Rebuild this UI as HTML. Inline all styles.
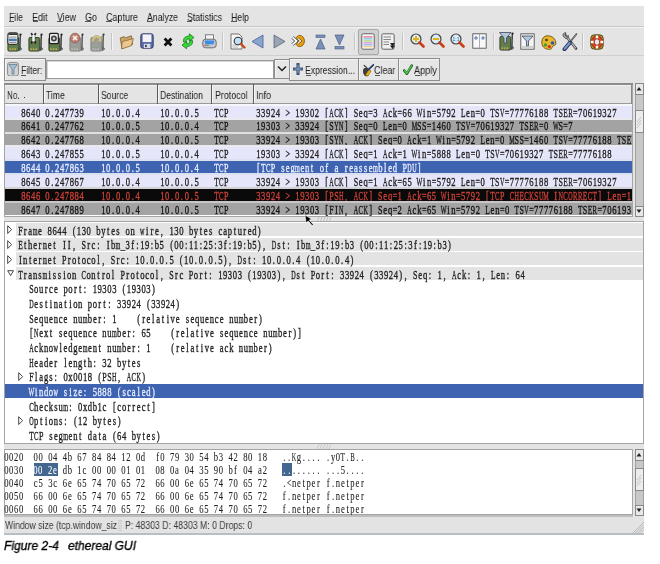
<!DOCTYPE html><html><head><meta charset="utf-8"><style>html,body{margin:0;padding:0;width:660px;height:564px;overflow:hidden;background:#fff;}.r{position:absolute;}.sv{will-change:transform;overflow:visible;}.t{position:absolute;white-space:pre;transform-origin:0 0;will-change:transform;}</style></head><body><div class="r" style="left:0px;top:0px;width:660px;height:564px;background:#fff;"></div>
<div class="r" style="left:4px;top:6px;width:640px;height:527px;background:#e4e4e4;"></div>
<div class="r" style="left:4px;top:26px;width:640px;height:1px;background:#c8c8c8;"></div>
<div class="r" style="left:4px;top:27px;width:640px;height:1px;background:#f2f2f2;"></div>
<div class="t" style="left:8.50px;top:11.52px;font-family:'Liberation Sans', sans-serif;font-size:11.2px;line-height:11.2px;color:#1a1a1a;transform:scaleX(0.7764);">File</div>
<div class="r" style="left:9px;top:21.4px;width:5px;height:1px;background:#555;"></div>
<div class="t" style="left:32.00px;top:11.52px;font-family:'Liberation Sans', sans-serif;font-size:11.2px;line-height:11.2px;color:#1a1a1a;transform:scaleX(0.8039);">Edit</div>
<div class="r" style="left:32.5px;top:21.4px;width:5px;height:1px;background:#555;"></div>
<div class="t" style="left:56.50px;top:11.52px;font-family:'Liberation Sans', sans-serif;font-size:11.2px;line-height:11.2px;color:#1a1a1a;transform:scaleX(0.7901);">View</div>
<div class="r" style="left:57px;top:21.4px;width:6px;height:1px;background:#555;"></div>
<div class="t" style="left:84.50px;top:11.52px;font-family:'Liberation Sans', sans-serif;font-size:11.2px;line-height:11.2px;color:#1a1a1a;transform:scaleX(0.8033);">Go</div>
<div class="r" style="left:85px;top:21.4px;width:6px;height:1px;background:#555;"></div>
<div class="t" style="left:105.50px;top:11.52px;font-family:'Liberation Sans', sans-serif;font-size:11.2px;line-height:11.2px;color:#1a1a1a;transform:scaleX(0.8038);">Capture</div>
<div class="r" style="left:106px;top:21.4px;width:6px;height:1px;background:#555;"></div>
<div class="t" style="left:146.50px;top:11.52px;font-family:'Liberation Sans', sans-serif;font-size:11.2px;line-height:11.2px;color:#1a1a1a;transform:scaleX(0.7786);">Analyze</div>
<div class="r" style="left:147px;top:21.4px;width:6px;height:1px;background:#555;"></div>
<div class="t" style="left:186.50px;top:11.52px;font-family:'Liberation Sans', sans-serif;font-size:11.2px;line-height:11.2px;color:#1a1a1a;transform:scaleX(0.7818);">Statistics</div>
<div class="r" style="left:187px;top:21.4px;width:5px;height:1px;background:#555;"></div>
<div class="t" style="left:230.50px;top:11.52px;font-family:'Liberation Sans', sans-serif;font-size:11.2px;line-height:11.2px;color:#1a1a1a;transform:scaleX(0.7821);">Help</div>
<div class="r" style="left:231px;top:21.4px;width:6px;height:1px;background:#555;"></div>
<div class="r" style="left:4px;top:55px;width:640px;height:1px;background:#cfcfcf;"></div>
<div class="r" style="left:111px;top:33px;width:1px;height:17px;background:#c4c4c4;"></div>
<div class="r" style="left:112px;top:33px;width:1px;height:17px;background:#f4f4f4;"></div>
<div class="r" style="left:222px;top:33px;width:1px;height:17px;background:#c4c4c4;"></div>
<div class="r" style="left:223px;top:33px;width:1px;height:17px;background:#f4f4f4;"></div>
<div class="r" style="left:354px;top:33px;width:1px;height:17px;background:#c4c4c4;"></div>
<div class="r" style="left:355px;top:33px;width:1px;height:17px;background:#f4f4f4;"></div>
<div class="r" style="left:402px;top:33px;width:1px;height:17px;background:#c4c4c4;"></div>
<div class="r" style="left:403px;top:33px;width:1px;height:17px;background:#f4f4f4;"></div>
<div class="r" style="left:493px;top:33px;width:1px;height:17px;background:#c4c4c4;"></div>
<div class="r" style="left:494px;top:33px;width:1px;height:17px;background:#f4f4f4;"></div>
<div class="r" style="left:582px;top:33px;width:1px;height:17px;background:#c4c4c4;"></div>
<div class="r" style="left:583px;top:33px;width:1px;height:17px;background:#f4f4f4;"></div>
<svg class="r" style="left:6.7px;top:31.6px" width="16" height="20" viewBox="0 0 16 20"><g opacity="1"><rect x="0.9" y="5.5" width="10.8" height="13.6" rx="1.2" fill="#5f7f4c" stroke="#2c3c24" stroke-width="0.9"/><path d="M2.5 10 L9 10 M2.5 13 L7 13" stroke="#8a6a40" stroke-width="0.8"/><rect x="2.2" y="16.3" width="1.6" height="2" fill="#c0a850"/><rect x="4.8" y="16.3" width="1.6" height="2" fill="#c0a850"/><rect x="7.4" y="16.3" width="1.6" height="2" fill="#c0a850"/><path d="M13.3 2.5 L12.8 18.8" stroke="#2a2a2a" stroke-width="1.3" fill="none"/><circle cx="13.6" cy="2.6" r="1.1" fill="#222"/><path d="M12.6 15 L14.6 17.5" stroke="#555" stroke-width="1.4"/><rect x="0.9" y="0.8" width="10" height="11.5" rx="1.6" fill="#f6f6f6" stroke="#1e1e1e" stroke-width="1"/><rect x="1.4" y="1.2" width="9" height="1.8" fill="#333"/><rect x="2.3" y="4.6" width="7.2" height="0.9" fill="#777"/><rect x="2" y="6.6" width="7.8" height="2.6" fill="#4a7ab0"/><rect x="2.3" y="10.1" width="7.2" height="0.9" fill="#888"/></g></svg>
<svg class="r" style="left:27.7px;top:31.6px" width="16" height="20" viewBox="0 0 16 20"><g opacity="1"><rect x="0.9" y="5.5" width="10.8" height="13.6" rx="1.2" fill="#5f7f4c" stroke="#2c3c24" stroke-width="0.9"/><path d="M2.5 10 L9 10 M2.5 13 L7 13" stroke="#8a6a40" stroke-width="0.8"/><rect x="2.2" y="16.3" width="1.6" height="2" fill="#c0a850"/><rect x="4.8" y="16.3" width="1.6" height="2" fill="#c0a850"/><rect x="7.4" y="16.3" width="1.6" height="2" fill="#c0a850"/><path d="M13.3 2.5 L12.8 18.8" stroke="#2a2a2a" stroke-width="1.3" fill="none"/><circle cx="13.6" cy="2.6" r="1.1" fill="#222"/><path d="M12.6 15 L14.6 17.5" stroke="#555" stroke-width="1.4"/><path d="M3.2 1.2 L4.6 3.5 L4.6 9 L3.2 11.5 M7.8 1.2 L6.4 3.5 L6.4 9 L7.8 11.5" stroke="#1a1a1a" stroke-width="1.6" fill="none"/><rect x="4.2" y="3" width="2.6" height="6.5" fill="#fafafa"/></g></svg>
<svg class="r" style="left:48.2px;top:31.6px" width="16" height="20" viewBox="0 0 16 20"><g opacity="1"><rect x="0.9" y="5.5" width="10.8" height="13.6" rx="1.2" fill="#5f7f4c" stroke="#2c3c24" stroke-width="0.9"/><path d="M2.5 10 L9 10 M2.5 13 L7 13" stroke="#8a6a40" stroke-width="0.8"/><rect x="2.2" y="16.3" width="1.6" height="2" fill="#c0a850"/><rect x="4.8" y="16.3" width="1.6" height="2" fill="#c0a850"/><rect x="7.4" y="16.3" width="1.6" height="2" fill="#c0a850"/><path d="M13.3 2.5 L12.8 18.8" stroke="#2a2a2a" stroke-width="1.3" fill="none"/><circle cx="13.6" cy="2.6" r="1.1" fill="#222"/><path d="M12.6 15 L14.6 17.5" stroke="#555" stroke-width="1.4"/><rect x="0.9" y="0.8" width="10" height="11.5" rx="1.6" fill="#1e1e1e"/><rect x="2" y="2" width="7.8" height="9" rx="1" fill="#e8e8e8"/><circle cx="5.9" cy="6.5" r="3" fill="#444"/><circle cx="5.9" cy="6.5" r="1.2" fill="#ddd"/></g></svg>
<svg class="r" style="left:69px;top:31.6px" width="16" height="20" viewBox="0 0 16 20"><g opacity="0.85"><rect x="0.9" y="5.5" width="10.8" height="13.6" rx="1.2" fill="#8c908a" stroke="#6c706a" stroke-width="0.9"/><path d="M2.5 10 L9 10 M2.5 13 L7 13" stroke="#999" stroke-width="0.8"/><rect x="2.2" y="16.3" width="1.6" height="2" fill="#b0b0a8"/><rect x="4.8" y="16.3" width="1.6" height="2" fill="#b0b0a8"/><rect x="7.4" y="16.3" width="1.6" height="2" fill="#b0b0a8"/><path d="M13.3 2.5 L12.8 18.8" stroke="#2a2a2a" stroke-width="1.3" fill="none"/><circle cx="13.6" cy="2.6" r="1.1" fill="#222"/><path d="M12.6 15 L14.6 17.5" stroke="#555" stroke-width="1.4"/><circle cx="6" cy="6" r="4.8" fill="#c0705e" stroke="#7a4a40" stroke-width="0.8"/><path d="M4 4 L8 8 M8 4 L4 8" stroke="#fff" stroke-width="1.5"/></g></svg>
<svg class="r" style="left:89.8px;top:31.6px" width="16" height="20" viewBox="0 0 16 20"><g opacity="0.85"><rect x="0.9" y="5.5" width="10.8" height="13.6" rx="1.2" fill="#8c908a" stroke="#6c706a" stroke-width="0.9"/><path d="M2.5 10 L9 10 M2.5 13 L7 13" stroke="#999" stroke-width="0.8"/><rect x="2.2" y="16.3" width="1.6" height="2" fill="#b0b0a8"/><rect x="4.8" y="16.3" width="1.6" height="2" fill="#b0b0a8"/><rect x="7.4" y="16.3" width="1.6" height="2" fill="#b0b0a8"/><path d="M13.3 2.5 L12.8 18.8" stroke="#2a2a2a" stroke-width="1.3" fill="none"/><circle cx="13.6" cy="2.6" r="1.1" fill="#222"/><path d="M12.6 15 L14.6 17.5" stroke="#555" stroke-width="1.4"/><path d="M1.5 10 C1.5 3 8.5 1.5 10.5 6 L11.5 4 L11.5 10 L7 9 L9 7.8 C8 5 4 5 4 10Z" fill="#d8c070" stroke="#8a8a6a" stroke-width="0.6"/></g></svg>
<svg class="r" style="left:118.5px;top:33.5px" width="15" height="16" viewBox="0 0 15 16"><path d="M1.2 4 L5 2.6 L6.4 3.8 L12.5 1.8 L13.5 10.5 L3 14.5Z" fill="#c8a468" stroke="#7a6030" stroke-width="0.8"/><path d="M3.2 7.6 L14.4 4.6 L12.4 11.6 L2.6 15Z" fill="#ecc88e" stroke="#8a6a38" stroke-width="0.8"/></svg>
<svg class="r" style="left:139.5px;top:33px" width="14" height="16" viewBox="0 0 14 16"><rect x="0.8" y="0.8" width="12.4" height="14.4" rx="2" fill="#5a6aa8" stroke="#2a3460" stroke-width="0.9"/><rect x="2.6" y="1.4" width="8.8" height="7.6" fill="#f2f2f8"/><rect x="3.8" y="10.8" width="6.6" height="4.2" fill="#d8dce8"/><rect x="5" y="11.8" width="1.8" height="2.4" fill="#445"/></svg>
<svg class="r" style="left:162.5px;top:37px" width="10" height="10" viewBox="0 0 10 10"><path d="M1.6 1.6 L8.4 8.4 M8.4 1.6 L1.6 8.4" stroke="#111" stroke-width="2.8"/></svg>
<svg class="r" style="left:181px;top:33px" width="14" height="17" viewBox="0 0 14 17"><path d="M2.5 9 C2 5 4.5 3 8 3.2 L8.5 0.8 L13 4.6 L8.2 8.2 L8.2 5.8 C6 5.8 4.8 7 5 9.2Z" fill="#38d838" stroke="#1a7a1a" stroke-width="0.8" stroke-linejoin="round"/><path d="M11.5 7.5 C12 11.5 9.5 13.5 6 13.3 L5.5 15.8 L1 12 L5.8 8.4 L5.8 10.8 C8 10.8 9.2 9.6 9 7.4Z" fill="#38d838" stroke="#1a7a1a" stroke-width="0.8" stroke-linejoin="round"/></svg>
<svg class="r" style="left:201.5px;top:33.5px" width="15" height="15" viewBox="0 0 15 15"><rect x="3.5" y="0.8" width="8" height="6" fill="#f4f4f4" stroke="#666" stroke-width="0.8"/><rect x="0.8" y="5.2" width="13.4" height="8.6" rx="2.8" fill="#c4c8cc" stroke="#555" stroke-width="0.8"/><path d="M2.6 6.6 L12.4 6.6 L11.6 10.2 L3.4 10.2Z" fill="#3a8ae8"/><rect x="2.5" y="10.8" width="2" height="1" fill="#d03030"/><rect x="4.8" y="10.8" width="2" height="1" fill="#30a030"/></svg>
<svg class="r" style="left:229.5px;top:32.5px" width="16" height="17" viewBox="0 0 16 17"><path d="M1 1 L9 1 L12 4 L12 16 L1 16Z" fill="#f6f6f6" stroke="#555" stroke-width="0.8"/><path d="M2.5 12 L9 12 M2.5 14 L8 14" stroke="#aaa" stroke-width="0.8"/><circle cx="8" cy="8" r="3.8" fill="#bfe0f8" stroke="#333" stroke-width="1.1"/><path d="M10.8 10.8 L14.5 14.5" stroke="#c84a1a" stroke-width="2.4" stroke-linecap="round"/></svg>
<svg class="r" style="left:251px;top:34px" width="13" height="15" viewBox="0 0 13 15"><path d="M12 1 L12 14 L1 7.5Z" fill="#8aa4d0" stroke="#4a6090" stroke-width="0.8"/></svg>
<svg class="r" style="left:272.5px;top:34px" width="13" height="15" viewBox="0 0 13 15"><path d="M1 1 L1 14 L12 7.5Z" fill="#9aa4b4" stroke="#5a6478" stroke-width="0.8"/></svg>
<svg class="r" style="left:291px;top:34px" width="14" height="14" viewBox="0 0 14 14"><ellipse cx="8.8" cy="7" rx="4.6" ry="5.6" fill="#eaa010" stroke="#8a5a08" stroke-width="0.9"/><path d="M6.8 4.4 L9.6 7 L6.8 9.6" stroke="#6a4a10" stroke-width="2.4" fill="none"/><path d="M6.8 4.4 L9.6 7 L6.8 9.6" stroke="#fff" stroke-width="1.1" fill="none"/><path d="M1.5 3.4 L5.6 7 L1.5 10.6" stroke="#444" stroke-width="3.2" fill="none" stroke-linejoin="round"/><path d="M1.5 3.4 L5.6 7 L1.5 10.6" stroke="#fff" stroke-width="1.8" fill="none" stroke-linejoin="round"/></svg>
<svg class="r" style="left:314.5px;top:33.5px" width="11" height="16" viewBox="0 0 11 16"><rect x="1" y="1" width="9" height="2.5" fill="#7a90b8" stroke="#4a5a80" stroke-width="0.6"/><path d="M5.5 5 L10 15 L1 15Z" fill="#7a90b8" stroke="#4a5a80" stroke-width="0.7"/></svg>
<svg class="r" style="left:333.5px;top:33.5px" width="11" height="16" viewBox="0 0 11 16"><path d="M1 1 L10 1 L5.5 11Z" fill="#7a90b8" stroke="#4a5a80" stroke-width="0.7"/><rect x="1" y="12.5" width="9" height="2.5" fill="#7a90b8" stroke="#4a5a80" stroke-width="0.6"/></svg>
<div class="r" style="left:358px;top:28.5px;width:20.7px;height:26px;background:#d0d0d0;border:1px solid #a8a8a8;box-sizing:border-box;border-radius:2px;"></div>
<svg class="r" style="left:360.5px;top:33px" width="14" height="17" viewBox="0 0 14 17"><rect x="0.8" y="0.8" width="12.4" height="15.4" rx="1.5" fill="#fafafa" stroke="#555" stroke-width="0.9"/><rect x="2.5" y="3" width="9" height="1.6" fill="#e88aa8"/><rect x="2.5" y="5" width="9" height="1.6" fill="#8ad0e0"/><rect x="2.5" y="7" width="9" height="1.6" fill="#b8e08a"/><rect x="2.5" y="9" width="9" height="1.6" fill="#e0a0e0"/><rect x="2.5" y="11" width="9" height="1.6" fill="#a0c0f0"/><rect x="2.5" y="13" width="9" height="1.4" fill="#f0d090"/></svg>
<svg class="r" style="left:381px;top:33px" width="15" height="17" viewBox="0 0 15 17"><rect x="0.8" y="0.8" width="12.4" height="15.4" rx="1.5" fill="#f0f0f0" stroke="#555" stroke-width="0.9"/><path d="M2.5 4 L10 4 M2.5 6.5 L10 6.5 M2.5 9 L8 9 M2.5 11.5 L8 11.5" stroke="#888" stroke-width="1"/><path d="M9 10 L14 10 L11.5 13.5Z M9 12.5 L14 12.5 L11.5 16Z" fill="#222"/></svg>
<svg class="r" style="left:409.5px;top:33px" width="15" height="16" viewBox="0 0 15 16"><circle cx="6" cy="6" r="5" fill="#d8ecf8" stroke="#444" stroke-width="1.2"/><path d="M6 3 L6 9 M3 6 L9 6" stroke="#e8b010" stroke-width="2"/><path d="M9.5 9.5 L13.5 13.5" stroke="#c8401a" stroke-width="2.6" stroke-linecap="round"/></svg>
<svg class="r" style="left:429.5px;top:33px" width="15" height="16" viewBox="0 0 15 16"><circle cx="6" cy="6" r="5" fill="#d8ecf8" stroke="#444" stroke-width="1.2"/><path d="M3 6 L9 6" stroke="#e8b010" stroke-width="2"/><path d="M9.5 9.5 L13.5 13.5" stroke="#c8401a" stroke-width="2.6" stroke-linecap="round"/></svg>
<svg class="r" style="left:450px;top:33px" width="15" height="16" viewBox="0 0 15 16"><circle cx="6" cy="6" r="5" fill="#d8ecf8" stroke="#444" stroke-width="1.2"/><text x="6" y="8" font-size="5" text-anchor="middle" fill="#3060a0" font-family="Liberation Sans">1:1</text><path d="M9.5 9.5 L13.5 13.5" stroke="#c8401a" stroke-width="2.6" stroke-linecap="round"/></svg>
<svg class="r" style="left:472px;top:33px" width="15" height="16" viewBox="0 0 15 16"><rect x="0.8" y="0.8" width="13.4" height="14.4" fill="#f8f8f8" stroke="#555" stroke-width="0.9"/><path d="M7.5 1 L7.5 15" stroke="#999" stroke-width="0.8"/><path d="M2 5 L6 5 M4 3 L4 7 M9 5 L13 5 M11 3 L11 7" stroke="#4070b0" stroke-width="0.9"/></svg>
<svg class="r" style="left:498.5px;top:31.2px" width="16" height="20" viewBox="0 0 16 20"><g opacity="1"><rect x="0.9" y="5.5" width="10.8" height="13.6" rx="1.2" fill="#5f7f4c" stroke="#2c3c24" stroke-width="0.9"/><path d="M2.5 10 L9 10 M2.5 13 L7 13" stroke="#8a6a40" stroke-width="0.8"/><rect x="2.2" y="16.3" width="1.6" height="2" fill="#c0a850"/><rect x="4.8" y="16.3" width="1.6" height="2" fill="#c0a850"/><rect x="7.4" y="16.3" width="1.6" height="2" fill="#c0a850"/><path d="M13.3 2.5 L12.8 18.8" stroke="#2a2a2a" stroke-width="1.3" fill="none"/><circle cx="13.6" cy="2.6" r="1.1" fill="#222"/><path d="M12.6 15 L14.6 17.5" stroke="#555" stroke-width="1.4"/><path d="M0.5 1.5 L12 1.5 L7.5 7 L7.5 12 L5 12 L5 7Z" fill="#b0c8e0" stroke="#445" stroke-width="0.8"/></g></svg>
<svg class="r" style="left:519.5px;top:32.5px" width="15" height="17" viewBox="0 0 15 17"><rect x="0.8" y="0.8" width="13.4" height="15.4" fill="#f4f4f4" stroke="#555" stroke-width="0.9"/><path d="M2 3 L13 3 L8.5 8 L8.5 13 L6.5 13 L6.5 8Z" fill="#b0c8e0" stroke="#445" stroke-width="0.8"/><path d="M2 14 L13 14" stroke="#aaa"/></svg>
<svg class="r" style="left:540.5px;top:35px" width="16" height="15" viewBox="0 0 16 15"><path d="M6 0.8 C11 0.5 15.2 4 14.8 8.5 C14.5 11 12.5 10.2 11.5 11.5 C10.5 13.5 11 14.5 7.5 14.3 C3 14 0.8 11 0.8 7 C0.8 3.5 3 1 6 0.8Z" fill="#e8b828" stroke="#6a5010" stroke-width="0.9"/><ellipse cx="5.5" cy="5" rx="1.6" ry="1.2" fill="#5a4a20"/><circle cx="4.5" cy="10" r="1.7" fill="#40a040"/><circle cx="8.3" cy="11.5" r="1.6" fill="#d82828"/><circle cx="11.5" cy="8" r="1.8" fill="#2858c8"/></svg>
<svg class="r" style="left:562px;top:31.5px" width="16" height="19" viewBox="0 0 16 19"><path d="M3.5 3.5 L14 16.5" stroke="#333" stroke-width="2.6" stroke-linecap="round"/><path d="M3.5 3.5 L14 16.5" stroke="#b8b8b8" stroke-width="1.2"/><path d="M1 4 C0.5 1.5 2.5 0.5 4 0.8 L3 3 L4.5 4.5 L6.5 3.5 C6.8 5.5 5 7 3 6.2Z" fill="#a8a8a8" stroke="#333" stroke-width="0.7"/><path d="M8.5 9.5 L14.5 2" stroke="#333" stroke-width="1.6" stroke-linecap="round"/><path d="M8.5 9.5 L14.5 2" stroke="#ccc" stroke-width="0.6"/><path d="M2.5 17.2 L7.8 10.8" stroke="#2a3a5a" stroke-width="4" stroke-linecap="round"/><path d="M2.8 16.6 L7.4 11.1" stroke="#7a9ad0" stroke-width="2.2" stroke-linecap="round"/></svg>
<svg class="r" style="left:590px;top:34px" width="14" height="16" viewBox="0 0 14 16"><rect x="0.8" y="0.8" width="12.4" height="14.4" rx="3.5" fill="#a89a30" stroke="#4a4010" stroke-width="0.9"/><ellipse cx="7" cy="8" rx="5.6" ry="6.4" fill="#e04018" stroke="#6a2010" stroke-width="0.6"/><path d="M7 1.6 L7 4.6 M7 11.4 L7 14.4 M0.9 8 L3.6 8 M10.4 8 L13.1 8" stroke="#fff" stroke-width="2.4"/><ellipse cx="7" cy="8" rx="2.7" ry="3.2" fill="#e8e8e8" stroke="#6a2010" stroke-width="0.7"/></svg>
<div class="r" style="left:4px;top:58px;width:41.5px;height:22.5px;background:#e6e6e6;border:1px solid #8c8c8c;box-sizing:border-box;box-shadow:inset 1px 1px 0 #f4f4f4;"></div>
<svg class="r" style="left:7px;top:61.5px" width="12" height="14.5" viewBox="0 0 12 14.5"><rect x="0.6" y="0.6" width="10.8" height="13.3" rx="2" fill="#d4d4d4" stroke="#8a8a8a" stroke-width="1"/><path d="M1.8 2.5 L10.2 2.5 L7 7 L7 12 L5 12 L5 7Z" fill="#9cc0e0" stroke="#566" stroke-width="0.6"/></svg>
<div class="t" style="left:20.50px;top:64.91px;font-family:'Liberation Sans', sans-serif;font-size:10.5px;line-height:10.5px;color:#222;transform:scaleX(0.8152);">Filter:</div>
<div class="r" style="left:21px;top:75px;width:5.4px;height:1px;background:#555;"></div>
<div class="r" style="left:45.8px;top:59.5px;width:228px;height:19.5px;background:#fff;border:1px solid #9a9a9a;box-sizing:border-box;box-shadow:inset 1px 1px 0 #d8d8d8;"></div>
<div class="r" style="left:273.5px;top:59px;width:16.0px;height:20px;background:#e6e6e6;border:1px solid #8c8c8c;box-sizing:border-box;box-shadow:inset 1px 1px 0 #f4f4f4;"></div>
<svg class="r" style="left:276.5px;top:65px" width="10" height="8" viewBox="0 0 10 8"><path d="M1 1.5 L5 5.5 L9 1.5" stroke="#222" stroke-width="1.5" fill="none"/></svg>
<div class="r" style="left:289px;top:58px;width:70px;height:22.5px;background:#e6e6e6;border:1px solid #8c8c8c;box-sizing:border-box;box-shadow:inset 1px 1px 0 #f4f4f4;"></div>
<div class="r" style="left:358px;top:58px;width:41px;height:22.5px;background:#e6e6e6;border:1px solid #8c8c8c;box-sizing:border-box;box-shadow:inset 1px 1px 0 #f4f4f4;"></div>
<div class="r" style="left:398px;top:58px;width:41.5px;height:22.5px;background:#e6e6e6;border:1px solid #8c8c8c;box-sizing:border-box;box-shadow:inset 1px 1px 0 #f4f4f4;"></div>
<svg class="r" style="left:293px;top:63px" width="10" height="12" viewBox="0 0 10 12"><path d="M5 1 L5 11 M0.6 6 L9.4 6" stroke="#3e5878" stroke-width="3.2" stroke-linecap="round"/><path d="M5 2 L5 10 M1.6 6 L8.4 6" stroke="#8aa6c6" stroke-width="1"/></svg>
<div class="t" style="left:305.00px;top:64.91px;font-family:'Liberation Sans', sans-serif;font-size:10.5px;line-height:10.5px;color:#222;transform:scaleX(0.8237);">Expression...</div>
<div class="r" style="left:305.5px;top:75px;width:5.5px;height:1px;background:#555;"></div>
<svg class="r" style="left:361.5px;top:62.5px" width="12" height="14" viewBox="0 0 12 14"><path d="M2 2 C3 4 5 4 5 6" stroke="#444" stroke-width="1.4" fill="none"/><path d="M1 8 C1 5 3 4.5 5.5 5 L9 8 L6 13 C3 14 1 12 1 8Z" fill="#3c3c3c"/><path d="M9 8 L6 13 L3.5 12 L7 6.5Z" fill="#e8b010" stroke="#8a6a10" stroke-width="0.5"/><path d="M6.5 6.5 L11.5 1.8" stroke="#2a3a6a" stroke-width="1.8" stroke-linecap="round"/></svg>
<div class="t" style="left:374.00px;top:64.91px;font-family:'Liberation Sans', sans-serif;font-size:10.5px;line-height:10.5px;color:#222;transform:scaleX(0.8488);">Clear</div>
<div class="r" style="left:374.5px;top:75px;width:5.5px;height:1px;background:#555;"></div>
<svg class="r" style="left:403px;top:63.5px" width="10" height="11.5" viewBox="0 0 10 11.5"><path d="M1.2 6.5 L3.8 9.8 L8.8 1.5" stroke="#1e6a1e" stroke-width="2.6" fill="none" stroke-linecap="round" stroke-linejoin="round"/><path d="M1.5 6.6 L3.8 9.3 L8.5 1.8" stroke="#5ad05a" stroke-width="1.2" fill="none" stroke-linecap="round"/></svg>
<div class="t" style="left:414.00px;top:64.91px;font-family:'Liberation Sans', sans-serif;font-size:10.5px;line-height:10.5px;color:#222;transform:scaleX(0.8719);">Apply</div>
<div class="r" style="left:414.5px;top:75px;width:5.5px;height:1px;background:#555;"></div>
<div class="r" style="left:4px;top:83px;width:629px;height:134px;background:#fff;border:1px solid #a4a4a4;box-sizing:border-box;"></div>
<div class="r" style="left:5px;top:84px;width:627px;height:20px;background:#e4e4e4;border-bottom:1px solid #9a9a9a;box-sizing:border-box;"></div>
<div class="r" style="left:4px;top:83px;width:629px;height:1.6px;background:#8c8c8c;"></div>
<div class="r" style="left:5px;top:85px;width:627px;height:1px;background:#f2f2f2;"></div>
<div class="r" style="left:43px;top:84px;width:1px;height:20px;background:#5a5a5a;"></div>
<div class="r" style="left:44px;top:85px;width:1px;height:18px;background:#f6f6f6;"></div>
<div class="r" style="left:98px;top:84px;width:1px;height:20px;background:#5a5a5a;"></div>
<div class="r" style="left:99px;top:85px;width:1px;height:18px;background:#f6f6f6;"></div>
<div class="r" style="left:157px;top:84px;width:1px;height:20px;background:#5a5a5a;"></div>
<div class="r" style="left:158px;top:85px;width:1px;height:18px;background:#f6f6f6;"></div>
<div class="r" style="left:211px;top:84px;width:1px;height:20px;background:#5a5a5a;"></div>
<div class="r" style="left:212px;top:85px;width:1px;height:18px;background:#f6f6f6;"></div>
<div class="r" style="left:253px;top:84px;width:1px;height:20px;background:#5a5a5a;"></div>
<div class="r" style="left:254px;top:85px;width:1px;height:18px;background:#f6f6f6;"></div>
<div class="r" style="left:631px;top:84px;width:1px;height:20px;background:#8a8a8a;"></div>
<div class="t" style="left:7.30px;top:89.59px;font-family:'Liberation Sans', sans-serif;font-size:11px;line-height:11px;color:#222;transform:scaleX(0.7358);">No.</div>
<div class="r" style="left:23.5px;top:96.8px;width:1.6px;height:1.6px;background:#333;"></div>
<div class="t" style="left:46.00px;top:89.59px;font-family:'Liberation Sans', sans-serif;font-size:11px;line-height:11px;color:#222;transform:scaleX(0.7776);">Time</div>
<div class="t" style="left:101.30px;top:89.59px;font-family:'Liberation Sans', sans-serif;font-size:11px;line-height:11px;color:#222;transform:scaleX(0.7803);">Source</div>
<div class="t" style="left:160.40px;top:89.59px;font-family:'Liberation Sans', sans-serif;font-size:11px;line-height:11px;color:#222;transform:scaleX(0.7793);">Destination</div>
<div class="t" style="left:214.50px;top:89.59px;font-family:'Liberation Sans', sans-serif;font-size:11px;line-height:11px;color:#222;transform:scaleX(0.8053);">Protocol</div>
<div class="t" style="left:256.20px;top:89.59px;font-family:'Liberation Sans', sans-serif;font-size:11px;line-height:11px;color:#222;transform:scaleX(0.8170);">Info</div>
<div class="r" style="left:5px;top:104px;width:627px;height:112px;overflow:hidden;">
<div class="r" style="left:0px;top:2px;width:627px;height:12px;background:#e6e6fa;"></div>
<div class="r" style="left:0px;top:0px;width:627px;height:2px;background:#f6f6fa;"></div>
<svg class="r sv" style="left:16.00px;top:-0.50px" width="26" height="17"><g text-anchor="middle" font-family="Liberation Serif" font-size="12.3" fill="#222" stroke="#222" stroke-width="0.35"><text transform="scale(0.7,1)" y="13" x="3.5 10.4 17.4 24.4">8640</text></g></svg>
<svg class="r sv" style="left:39.80px;top:-0.50px" width="45" height="17"><g text-anchor="middle" font-family="Liberation Serif" font-size="12.3" fill="#222" stroke="#222" stroke-width="0.35"><text transform="scale(0.7,1)" y="13" x="3.5 10.4 17.4 24.4 31.3 38.3 45.3 52.2">0.247739</text></g></svg>
<svg class="r sv" style="left:96.00px;top:-0.50px" width="45" height="17"><g text-anchor="middle" font-family="Liberation Serif" font-size="12.3" fill="#222" stroke="#222" stroke-width="0.35"><text transform="scale(0.7,1)" y="13" x="3.5 10.4 17.4 24.4 31.3 38.3 45.3 52.2">10.0.0.4</text></g></svg>
<svg class="r sv" style="left:154.80px;top:-0.50px" width="45" height="17"><g text-anchor="middle" font-family="Liberation Serif" font-size="12.3" fill="#222" stroke="#222" stroke-width="0.35"><text transform="scale(0.7,1)" y="13" x="3.5 10.4 17.4 24.4 31.3 38.3 45.3 52.2">10.0.0.5</text></g></svg>
<svg class="r sv" style="left:209.00px;top:-0.50px" width="21" height="17"><g text-anchor="middle" font-family="Liberation Serif" font-size="12.3" fill="#222" stroke="#222" stroke-width="0.35"><text transform="scale(0.55,1)" y="13" x="13.3">C</text><text transform="scale(0.6,1)" y="13" x="4.1">T</text><text transform="scale(0.65,1)" y="13" x="18.8">P</text></g></svg>
<svg class="r sv" style="left:250.80px;top:-0.50px" width="367" height="17"><g text-anchor="middle" font-family="Liberation Serif" font-size="12.3" fill="#222" stroke="#222" stroke-width="0.35"><text transform="scale(0.5,1)" y="13" x="151.1 170.6 258.4 326.6 492.4">AKAWV</text><text transform="scale(0.55,1)" y="13" x="146.2 571.7">CR</text><text transform="scale(0.6,1)" y="13" x="345.3 394.1 499.7 515.9">LTTE</text><text transform="scale(0.65,1)" y="13" x="48.8 153.8 176.2 221.2 273.8 341.2 371.2 386.2 468.8 491.2">&gt;S====S=S=</text><text transform="scale(0.7,1)" y="13" x="3.5 10.4 17.4 24.4 31.3 59.2 66.2 73.1 80.1 87.1 101.0 128.8 149.7 156.7 170.6 191.5 198.5 212.4 219.4 240.3 247.2 261.2 268.1 275.1 282.1 302.9 309.9 323.8 365.6 372.6 379.6 386.5 393.5 400.4 407.4 414.4 463.1 470.1 477.1 484.0 491.0 497.9 504.9 511.9">3392419302[]eq3ck66in5792en07777618870619327</text></g></svg>
<div class="r" style="left:0px;top:16px;width:627px;height:12px;background:#a3a3a3;"></div>
<div class="r" style="left:0px;top:14px;width:627px;height:2px;background:#ebebef;"></div>
<svg class="r sv" style="left:16.00px;top:13.37px" width="26" height="17"><g text-anchor="middle" font-family="Liberation Serif" font-size="12.3" fill="#141414" stroke="#141414" stroke-width="0.35"><text transform="scale(0.7,1)" y="13" x="3.5 10.4 17.4 24.4">8641</text></g></svg>
<svg class="r sv" style="left:39.80px;top:13.37px" width="45" height="17"><g text-anchor="middle" font-family="Liberation Serif" font-size="12.3" fill="#141414" stroke="#141414" stroke-width="0.35"><text transform="scale(0.7,1)" y="13" x="3.5 10.4 17.4 24.4 31.3 38.3 45.3 52.2">0.247762</text></g></svg>
<svg class="r sv" style="left:96.00px;top:13.37px" width="45" height="17"><g text-anchor="middle" font-family="Liberation Serif" font-size="12.3" fill="#141414" stroke="#141414" stroke-width="0.35"><text transform="scale(0.7,1)" y="13" x="3.5 10.4 17.4 24.4 31.3 38.3 45.3 52.2">10.0.0.5</text></g></svg>
<svg class="r sv" style="left:154.80px;top:13.37px" width="45" height="17"><g text-anchor="middle" font-family="Liberation Serif" font-size="12.3" fill="#141414" stroke="#141414" stroke-width="0.35"><text transform="scale(0.7,1)" y="13" x="3.5 10.4 17.4 24.4 31.3 38.3 45.3 52.2">10.0.0.4</text></g></svg>
<svg class="r sv" style="left:209.00px;top:13.37px" width="21" height="17"><g text-anchor="middle" font-family="Liberation Serif" font-size="12.3" fill="#141414" stroke="#141414" stroke-width="0.35"><text transform="scale(0.55,1)" y="13" x="13.3">C</text><text transform="scale(0.6,1)" y="13" x="4.1">T</text><text transform="scale(0.65,1)" y="13" x="18.8">P</text></g></svg>
<svg class="r sv" style="left:250.80px;top:13.37px" width="323" height="17"><g text-anchor="middle" font-family="Liberation Serif" font-size="12.3" fill="#141414" stroke="#141414" stroke-width="0.35"><text transform="scale(0.5,1)" y="13" x="160.9 170.6 316.9 424.1 599.6">YNMVW</text><text transform="scale(0.55,1)" y="13" x="509.7">R</text><text transform="scale(0.6,1)" y="13" x="215.3 337.2 442.8 459.1">LTTE</text><text transform="scale(0.65,1)" y="13" x="48.8 116.2 153.8 176.2 221.2 251.2 258.8 266.2 318.8 333.8 416.2 438.8 468.8 476.2">&gt;SS==SS=S=S=S=</text><text transform="scale(0.7,1)" y="13" x="3.5 10.4 17.4 24.4 31.3 59.2 66.2 73.1 80.1 87.1 101.0 128.8 149.7 156.7 170.6 191.5 198.5 212.4 254.2 261.2 268.1 275.1 316.9 323.8 330.8 337.8 344.7 351.7 358.7 365.6 414.4 449.2">1930333924[]eq0en014607061932707</text></g></svg>
<div class="r" style="left:0px;top:30px;width:627px;height:12px;background:#a3a3a3;"></div>
<div class="r" style="left:0px;top:28px;width:627px;height:2px;background:#e0e0e0;"></div>
<svg class="r sv" style="left:16.00px;top:27.24px" width="26" height="17"><g text-anchor="middle" font-family="Liberation Serif" font-size="12.3" fill="#141414" stroke="#141414" stroke-width="0.35"><text transform="scale(0.7,1)" y="13" x="3.5 10.4 17.4 24.4">8642</text></g></svg>
<svg class="r sv" style="left:39.80px;top:27.24px" width="45" height="17"><g text-anchor="middle" font-family="Liberation Serif" font-size="12.3" fill="#141414" stroke="#141414" stroke-width="0.35"><text transform="scale(0.7,1)" y="13" x="3.5 10.4 17.4 24.4 31.3 38.3 45.3 52.2">0.247768</text></g></svg>
<svg class="r sv" style="left:96.00px;top:27.24px" width="45" height="17"><g text-anchor="middle" font-family="Liberation Serif" font-size="12.3" fill="#141414" stroke="#141414" stroke-width="0.35"><text transform="scale(0.7,1)" y="13" x="3.5 10.4 17.4 24.4 31.3 38.3 45.3 52.2">10.0.0.4</text></g></svg>
<svg class="r sv" style="left:154.80px;top:27.24px" width="45" height="17"><g text-anchor="middle" font-family="Liberation Serif" font-size="12.3" fill="#141414" stroke="#141414" stroke-width="0.35"><text transform="scale(0.7,1)" y="13" x="3.5 10.4 17.4 24.4 31.3 38.3 45.3 52.2">10.0.0.5</text></g></svg>
<svg class="r sv" style="left:209.00px;top:27.24px" width="21" height="17"><g text-anchor="middle" font-family="Liberation Serif" font-size="12.3" fill="#141414" stroke="#141414" stroke-width="0.35"><text transform="scale(0.55,1)" y="13" x="13.3">C</text><text transform="scale(0.6,1)" y="13" x="4.1">T</text><text transform="scale(0.65,1)" y="13" x="18.8">P</text></g></svg>
<svg class="r sv" style="left:250.80px;top:27.24px" width="430" height="17"><g text-anchor="middle" font-family="Liberation Serif" font-size="12.3" fill="#141414" stroke="#141414" stroke-width="0.35"><text transform="scale(0.5,1)" y="13" x="160.9 170.6 199.9 219.4 307.1 365.6 511.9 619.1">YNAKAWMV</text><text transform="scale(0.55,1)" y="13" x="190.6 686.9">CR</text><text transform="scale(0.6,1)" y="13" x="377.8 499.7 605.3 621.6">LTTE</text><text transform="scale(0.65,1)" y="13" x="48.8 116.2 191.2 213.8 258.8 303.8 371.2 401.2 408.8 416.2 468.8 483.8 566.2 588.8">&gt;SS====SS=S=S=</text><text transform="scale(0.7,1)" y="13" x="3.5 10.4 17.4 24.4 31.3 59.2 66.2 73.1 80.1 87.1 101.0 128.8 163.7 184.6 191.5 205.4 226.3 233.3 247.2 268.1 275.1 289.0 296.0 302.9 309.9 330.8 337.8 351.7 393.5 400.4 407.4 414.4 456.2 463.1 470.1 477.1 484.0 491.0 497.9 504.9 553.7 560.6 567.6 574.6 581.5 588.5 595.4 602.4">3392419303[,]eq0ck1in5792en014607777618870619327</text></g></svg>
<div class="r" style="left:0px;top:43px;width:627px;height:12px;background:#e6e6fa;"></div>
<div class="r" style="left:0px;top:41px;width:627px;height:2px;background:#ebebef;"></div>
<svg class="r sv" style="left:16.00px;top:41.11px" width="26" height="17"><g text-anchor="middle" font-family="Liberation Serif" font-size="12.3" fill="#222" stroke="#222" stroke-width="0.35"><text transform="scale(0.7,1)" y="13" x="3.5 10.4 17.4 24.4">8643</text></g></svg>
<svg class="r sv" style="left:39.80px;top:41.11px" width="45" height="17"><g text-anchor="middle" font-family="Liberation Serif" font-size="12.3" fill="#222" stroke="#222" stroke-width="0.35"><text transform="scale(0.7,1)" y="13" x="3.5 10.4 17.4 24.4 31.3 38.3 45.3 52.2">0.247855</text></g></svg>
<svg class="r sv" style="left:96.00px;top:41.11px" width="45" height="17"><g text-anchor="middle" font-family="Liberation Serif" font-size="12.3" fill="#222" stroke="#222" stroke-width="0.35"><text transform="scale(0.7,1)" y="13" x="3.5 10.4 17.4 24.4 31.3 38.3 45.3 52.2">10.0.0.5</text></g></svg>
<svg class="r sv" style="left:154.80px;top:41.11px" width="45" height="17"><g text-anchor="middle" font-family="Liberation Serif" font-size="12.3" fill="#222" stroke="#222" stroke-width="0.35"><text transform="scale(0.7,1)" y="13" x="3.5 10.4 17.4 24.4 31.3 38.3 45.3 52.2">10.0.0.4</text></g></svg>
<svg class="r sv" style="left:209.00px;top:41.11px" width="21" height="17"><g text-anchor="middle" font-family="Liberation Serif" font-size="12.3" fill="#222" stroke="#222" stroke-width="0.35"><text transform="scale(0.55,1)" y="13" x="13.3">C</text><text transform="scale(0.6,1)" y="13" x="4.1">T</text><text transform="scale(0.65,1)" y="13" x="18.8">P</text></g></svg>
<svg class="r sv" style="left:250.80px;top:41.11px" width="362" height="17"><g text-anchor="middle" font-family="Liberation Serif" font-size="12.3" fill="#222" stroke="#222" stroke-width="0.35"><text transform="scale(0.5,1)" y="13" x="151.1 170.6 258.4 316.9 482.6">AKAWV</text><text transform="scale(0.55,1)" y="13" x="146.2 562.8">CR</text><text transform="scale(0.6,1)" y="13" x="337.2 385.9 491.6 507.8">LTTE</text><text transform="scale(0.65,1)" y="13" x="48.8 153.8 176.2 221.2 266.2 333.8 363.8 378.8 461.2 483.8">&gt;S====S=S=</text><text transform="scale(0.7,1)" y="13" x="3.5 10.4 17.4 24.4 31.3 59.2 66.2 73.1 80.1 87.1 101.0 128.8 149.7 156.7 170.6 191.5 198.5 212.4 233.3 240.3 254.2 261.2 268.1 275.1 296.0 302.9 316.9 358.7 365.6 372.6 379.6 386.5 393.5 400.4 407.4 456.2 463.1 470.1 477.1 484.0 491.0 497.9 504.9">1930333924[]eq1ck1in5888en07061932777776188</text></g></svg>
<div class="r" style="left:0px;top:57px;width:627px;height:12px;background:#3e63b0;"></div>
<div class="r" style="left:0px;top:55px;width:627px;height:2px;background:#dbe1f1;"></div>
<svg class="r sv" style="left:16.00px;top:54.98px" width="26" height="17"><g text-anchor="middle" font-family="Liberation Serif" font-size="12.3" fill="#e8ecff" stroke="#e8ecff" stroke-width="0.35"><text transform="scale(0.7,1)" y="13" x="3.5 10.4 17.4 24.4">8644</text></g></svg>
<svg class="r sv" style="left:39.80px;top:54.98px" width="45" height="17"><g text-anchor="middle" font-family="Liberation Serif" font-size="12.3" fill="#e8ecff" stroke="#e8ecff" stroke-width="0.35"><text transform="scale(0.7,1)" y="13" x="3.5 10.4 17.4 24.4 31.3 38.3 45.3 52.2">0.247863</text></g></svg>
<svg class="r sv" style="left:96.00px;top:54.98px" width="45" height="17"><g text-anchor="middle" font-family="Liberation Serif" font-size="12.3" fill="#e8ecff" stroke="#e8ecff" stroke-width="0.35"><text transform="scale(0.7,1)" y="13" x="3.5 10.4 17.4 24.4 31.3 38.3 45.3 52.2">10.0.0.5</text></g></svg>
<svg class="r sv" style="left:154.80px;top:54.98px" width="45" height="17"><g text-anchor="middle" font-family="Liberation Serif" font-size="12.3" fill="#e8ecff" stroke="#e8ecff" stroke-width="0.35"><text transform="scale(0.7,1)" y="13" x="3.5 10.4 17.4 24.4 31.3 38.3 45.3 52.2">10.0.0.4</text></g></svg>
<svg class="r sv" style="left:209.00px;top:54.98px" width="21" height="17"><g text-anchor="middle" font-family="Liberation Serif" font-size="12.3" fill="#e8ecff" stroke="#e8ecff" stroke-width="0.35"><text transform="scale(0.55,1)" y="13" x="13.3">C</text><text transform="scale(0.6,1)" y="13" x="4.1">T</text><text transform="scale(0.65,1)" y="13" x="18.8">P</text></g></svg>
<svg class="r sv" style="left:250.80px;top:54.98px" width="172" height="17"><g text-anchor="middle" font-family="Liberation Serif" font-size="12.3" fill="#e8ecff" stroke="#e8ecff" stroke-width="0.35"><text transform="scale(0.5,1)" y="13" x="82.9 238.9 307.1 316.9">mmDU</text><text transform="scale(0.55,1)" y="13" x="22.2">C</text><text transform="scale(0.6,1)" y="13" x="12.2">T</text><text transform="scale(0.65,1)" y="13" x="26.2 228.8">PP</text><text transform="scale(0.7,1)" y="13" x="3.5 38.3 45.3 52.2 66.2 73.1 80.1 94.0 101.0 114.9 128.8 135.8 142.8 149.7 156.7 163.7 177.6 184.6 191.5 198.5 233.3">[segentofareassebled]</text></g></svg>
<div class="r" style="left:0px;top:71px;width:627px;height:12px;background:#e6e6fa;"></div>
<div class="r" style="left:0px;top:69px;width:627px;height:2px;background:#dbe1f1;"></div>
<svg class="r sv" style="left:16.00px;top:68.85px" width="26" height="17"><g text-anchor="middle" font-family="Liberation Serif" font-size="12.3" fill="#222" stroke="#222" stroke-width="0.35"><text transform="scale(0.7,1)" y="13" x="3.5 10.4 17.4 24.4">8645</text></g></svg>
<svg class="r sv" style="left:39.80px;top:68.85px" width="45" height="17"><g text-anchor="middle" font-family="Liberation Serif" font-size="12.3" fill="#222" stroke="#222" stroke-width="0.35"><text transform="scale(0.7,1)" y="13" x="3.5 10.4 17.4 24.4 31.3 38.3 45.3 52.2">0.247867</text></g></svg>
<svg class="r sv" style="left:96.00px;top:68.85px" width="45" height="17"><g text-anchor="middle" font-family="Liberation Serif" font-size="12.3" fill="#222" stroke="#222" stroke-width="0.35"><text transform="scale(0.7,1)" y="13" x="3.5 10.4 17.4 24.4 31.3 38.3 45.3 52.2">10.0.0.4</text></g></svg>
<svg class="r sv" style="left:154.80px;top:68.85px" width="45" height="17"><g text-anchor="middle" font-family="Liberation Serif" font-size="12.3" fill="#222" stroke="#222" stroke-width="0.35"><text transform="scale(0.7,1)" y="13" x="3.5 10.4 17.4 24.4 31.3 38.3 45.3 52.2">10.0.0.5</text></g></svg>
<svg class="r sv" style="left:209.00px;top:68.85px" width="21" height="17"><g text-anchor="middle" font-family="Liberation Serif" font-size="12.3" fill="#222" stroke="#222" stroke-width="0.35"><text transform="scale(0.55,1)" y="13" x="13.3">C</text><text transform="scale(0.6,1)" y="13" x="4.1">T</text><text transform="scale(0.65,1)" y="13" x="18.8">P</text></g></svg>
<svg class="r sv" style="left:250.80px;top:68.85px" width="367" height="17"><g text-anchor="middle" font-family="Liberation Serif" font-size="12.3" fill="#222" stroke="#222" stroke-width="0.35"><text transform="scale(0.5,1)" y="13" x="151.1 170.6 258.4 326.6 492.4">AKAWV</text><text transform="scale(0.55,1)" y="13" x="146.2 571.7">CR</text><text transform="scale(0.6,1)" y="13" x="345.3 394.1 499.7 515.9">LTTE</text><text transform="scale(0.65,1)" y="13" x="48.8 153.8 176.2 221.2 273.8 341.2 371.2 386.2 468.8 491.2">&gt;S====S=S=</text><text transform="scale(0.7,1)" y="13" x="3.5 10.4 17.4 24.4 31.3 59.2 66.2 73.1 80.1 87.1 101.0 128.8 149.7 156.7 170.6 191.5 198.5 212.4 219.4 240.3 247.2 261.2 268.1 275.1 282.1 302.9 309.9 323.8 365.6 372.6 379.6 386.5 393.5 400.4 407.4 414.4 463.1 470.1 477.1 484.0 491.0 497.9 504.9 511.9">3392419303[]eq1ck65in5792en07777618870619327</text></g></svg>
<div class="r" style="left:0px;top:85px;width:627px;height:12px;background:#0a0a0a;"></div>
<div class="r" style="left:0px;top:83px;width:627px;height:2px;background:#d2d2d5;"></div>
<svg class="r sv" style="left:16.00px;top:82.72px" width="26" height="17"><g text-anchor="middle" font-family="Liberation Serif" font-size="12.3" fill="#cc4038" stroke="#cc4038" stroke-width="0.35"><text transform="scale(0.7,1)" y="13" x="3.5 10.4 17.4 24.4">8646</text></g></svg>
<svg class="r sv" style="left:39.80px;top:82.72px" width="45" height="17"><g text-anchor="middle" font-family="Liberation Serif" font-size="12.3" fill="#cc4038" stroke="#cc4038" stroke-width="0.35"><text transform="scale(0.7,1)" y="13" x="3.5 10.4 17.4 24.4 31.3 38.3 45.3 52.2">0.247884</text></g></svg>
<svg class="r sv" style="left:96.00px;top:82.72px" width="45" height="17"><g text-anchor="middle" font-family="Liberation Serif" font-size="12.3" fill="#cc4038" stroke="#cc4038" stroke-width="0.35"><text transform="scale(0.7,1)" y="13" x="3.5 10.4 17.4 24.4 31.3 38.3 45.3 52.2">10.0.0.4</text></g></svg>
<svg class="r sv" style="left:154.80px;top:82.72px" width="45" height="17"><g text-anchor="middle" font-family="Liberation Serif" font-size="12.3" fill="#cc4038" stroke="#cc4038" stroke-width="0.35"><text transform="scale(0.7,1)" y="13" x="3.5 10.4 17.4 24.4 31.3 38.3 45.3 52.2">10.0.0.5</text></g></svg>
<svg class="r sv" style="left:209.00px;top:82.72px" width="21" height="17"><g text-anchor="middle" font-family="Liberation Serif" font-size="12.3" fill="#cc4038" stroke="#cc4038" stroke-width="0.35"><text transform="scale(0.55,1)" y="13" x="13.3">C</text><text transform="scale(0.6,1)" y="13" x="4.1">T</text><text transform="scale(0.65,1)" y="13" x="18.8">P</text></g></svg>
<svg class="r sv" style="left:250.80px;top:82.72px" width="381" height="17"><g text-anchor="middle" font-family="Liberation Serif" font-size="12.3" fill="#cc4038" stroke="#cc4038" stroke-width="0.35"><text transform="scale(0.5,1)" y="13" x="170.6 199.9 219.4 307.1 375.4 521.6 550.9 570.4 580.1 609.4 628.9">HAKAWHKUMNO</text><text transform="scale(0.55,1)" y="13" x="190.6 438.7 465.3 491.9 562.8 580.6 589.4 607.2">CCCCCRRC</text><text transform="scale(0.6,1)" y="13" x="394.1 442.8 548.4 564.7 589.1">TEETL</text><text transform="scale(0.65,1)" y="13" x="48.8 116.2 123.8 191.2 213.8 258.8 311.2 378.8 431.2 566.2">&gt;PSS===PS=</text><text transform="scale(0.7,1)" y="13" x="3.5 10.4 17.4 24.4 31.3 59.2 66.2 73.1 80.1 87.1 101.0 128.8 163.7 184.6 191.5 205.4 226.3 233.3 247.2 254.2 275.1 282.1 296.0 302.9 309.9 316.9 330.8 428.3 491.0 511.9 518.8 532.8">3392419303[,]eq1ck65in5792[I]en1</text></g></svg>
<div class="r" style="left:0px;top:99px;width:627px;height:12px;background:#a3a3a3;"></div>
<div class="r" style="left:0px;top:97px;width:627px;height:2px;background:#c7c7c7;"></div>
<svg class="r sv" style="left:16.00px;top:96.59px" width="26" height="17"><g text-anchor="middle" font-family="Liberation Serif" font-size="12.3" fill="#141414" stroke="#141414" stroke-width="0.35"><text transform="scale(0.7,1)" y="13" x="3.5 10.4 17.4 24.4">8647</text></g></svg>
<svg class="r sv" style="left:39.80px;top:96.59px" width="45" height="17"><g text-anchor="middle" font-family="Liberation Serif" font-size="12.3" fill="#141414" stroke="#141414" stroke-width="0.35"><text transform="scale(0.7,1)" y="13" x="3.5 10.4 17.4 24.4 31.3 38.3 45.3 52.2">0.247889</text></g></svg>
<svg class="r sv" style="left:96.00px;top:96.59px" width="45" height="17"><g text-anchor="middle" font-family="Liberation Serif" font-size="12.3" fill="#141414" stroke="#141414" stroke-width="0.35"><text transform="scale(0.7,1)" y="13" x="3.5 10.4 17.4 24.4 31.3 38.3 45.3 52.2">10.0.0.4</text></g></svg>
<svg class="r sv" style="left:154.80px;top:96.59px" width="45" height="17"><g text-anchor="middle" font-family="Liberation Serif" font-size="12.3" fill="#141414" stroke="#141414" stroke-width="0.35"><text transform="scale(0.7,1)" y="13" x="3.5 10.4 17.4 24.4 31.3 38.3 45.3 52.2">10.0.0.5</text></g></svg>
<svg class="r sv" style="left:209.00px;top:96.59px" width="21" height="17"><g text-anchor="middle" font-family="Liberation Serif" font-size="12.3" fill="#141414" stroke="#141414" stroke-width="0.35"><text transform="scale(0.55,1)" y="13" x="13.3">C</text><text transform="scale(0.6,1)" y="13" x="4.1">T</text><text transform="scale(0.65,1)" y="13" x="18.8">P</text></g></svg>
<svg class="r sv" style="left:250.80px;top:96.59px" width="391" height="17"><g text-anchor="middle" font-family="Liberation Serif" font-size="12.3" fill="#141414" stroke="#141414" stroke-width="0.35"><text transform="scale(0.5,1)" y="13" x="170.6 199.9 219.4 307.1 375.4 541.1">NAKAWV</text><text transform="scale(0.55,1)" y="13" x="190.6 616.0">CR</text><text transform="scale(0.6,1)" y="13" x="385.9 434.7 540.3 556.6">LTTE</text><text transform="scale(0.65,1)" y="13" x="48.8 116.2 191.2 213.8 258.8 311.2 378.8 408.8 423.8 506.2 528.8">&gt;FS====S=S=</text><text transform="scale(0.7,1)" y="13" x="3.5 10.4 17.4 24.4 31.3 59.2 66.2 73.1 80.1 87.1 101.0 114.9 128.8 163.7 184.6 191.5 205.4 226.3 233.3 247.2 254.2 275.1 282.1 296.0 302.9 309.9 316.9 337.8 344.7 358.7 400.4 407.4 414.4 421.3 428.3 435.3 442.2 449.2 497.9 504.9 511.9 518.8 525.8 532.8 539.7 546.7">3392419303[I,]eq2ck65in5792en07777618870619327</text></g></svg>
</div>
<div class="r" style="left:634.5px;top:83px;width:9.5px;height:134px;background:#c8c8c8;border:1px solid #a0a0a0;box-sizing:border-box;"></div>
<div class="r" style="left:634.5px;top:83px;width:9.5px;height:11.5px;background:#e8e8e8;border:1px solid #8a8a8a;box-sizing:border-box;"></div>
<svg class="r" style="left:636px;top:86px" width="6" height="5" viewBox="0 0 6 5"><path d="M0.5 4.5 L3 1 L5.5 4.5Z" fill="#222"/></svg>
<div class="r" style="left:634.5px;top:110.3px;width:9.5px;height:23px;background:#ececec;border:1px solid #8a8a8a;box-sizing:border-box;"></div>
<svg class="r" style="left:636px;top:113px" width="6" height="17" viewBox="0 0 6 17"><path d="M1 9 L5 4 M1 12 L5 7 M1 15 L5 10" stroke="#bbb" stroke-width="0.8"/></svg>
<div class="r" style="left:634.5px;top:205.5px;width:9.5px;height:11.5px;background:#e8e8e8;border:1px solid #8a8a8a;box-sizing:border-box;"></div>
<svg class="r" style="left:636px;top:208.5px" width="6" height="5" viewBox="0 0 6 5"><path d="M0.5 0.5 L3 4 L5.5 0.5Z" fill="#222"/></svg>
<svg class="r" style="left:316px;top:216.5px" width="17" height="5" viewBox="0 0 17 5"><path d="M1 5 L3 0 M4 5 L6 0 M7 5 L9 0 M10 5 L12 0 M13 5 L15 0" stroke="#b8b8b8" stroke-width="0.8"/></svg>
<div class="r" style="left:4px;top:221px;width:640px;height:223px;background:#fff;border:1px solid #a4a4a4;box-sizing:border-box;"></div>
<div class="r" style="left:16px;top:222.8px;width:627px;height:13.2px;background:#e3e3e3;"></div>
<svg class="r sv" style="left:17.50px;top:221.60px" width="250" height="17"><g text-anchor="middle" font-family="Liberation Serif" font-size="12.3" fill="#1e1e1e" stroke="#1e1e1e" stroke-width="0.35"><text transform="scale(0.5,1)" y="13" x="34.1 248.6">mw</text><text transform="scale(0.65,1)" y="13" x="3.8">F</text><text transform="scale(0.7,1)" y="13" x="10.4 17.4 31.3 45.3 52.2 59.2 66.2 80.1 87.1 94.0 101.0 114.9 121.9 128.8 135.8 142.8 156.7 163.7 184.6 191.5 198.5 205.4 219.4 226.3 233.3 247.2 254.2 261.2 268.1 275.1 289.0 296.0 302.9 309.9 316.9 323.8 330.8 337.8 344.7">rae8644(130bytesonire,130bytescaptured)</text></g></svg>
<svg class="r" style="left:6.5px;top:225.2px" width="6" height="10" viewBox="0 0 6 10"><path d="M0.7 0.7 L4.6 4.6 L0.7 8.5Z" fill="none" stroke="#333" stroke-width="0.9"/></svg>
<div class="r" style="left:16px;top:237.5px;width:627px;height:13.2px;background:#e3e3e3;"></div>
<svg class="r sv" style="left:17.50px;top:236.27px" width="440" height="17"><g text-anchor="middle" font-family="Liberation Serif" font-size="12.3" fill="#1e1e1e" stroke="#1e1e1e" stroke-width="0.35"><text transform="scale(0.5,1)" y="13" x="199.9 511.9 580.1">mDm</text><text transform="scale(0.6,1)" y="13" x="4.1">E</text><text transform="scale(0.65,1)" y="13" x="101.2">S</text><text transform="scale(0.7,1)" y="13" x="10.4 17.4 24.4 31.3 38.3 45.3 52.2 66.2 73.1 80.1 101.0 107.9 114.9 128.8 135.8 149.7 156.7 163.7 170.6 177.6 184.6 191.5 198.5 205.4 219.4 226.3 233.3 240.3 247.2 254.2 261.2 268.1 275.1 282.1 289.0 296.0 302.9 309.9 316.9 323.8 330.8 337.8 344.7 351.7 372.6 379.6 386.5 400.4 407.4 421.3 428.3 435.3 442.2 449.2 456.2 463.1 470.1 477.1 491.0 497.9 504.9 511.9 518.8 525.8 532.8 539.7 546.7 553.7 560.6 567.6 574.6 581.5 588.5 595.4 602.4 609.4 616.3">thernetII,rc:Ib_3f:19:b5(00:11:25:3f:19:b5),st:Ib_3f:19:b3(00:11:25:3f:19:b3)</text></g></svg>
<svg class="r" style="left:6.5px;top:239.86999999999998px" width="6" height="10" viewBox="0 0 6 10"><path d="M0.7 0.7 L4.6 4.6 L0.7 8.5Z" fill="none" stroke="#333" stroke-width="0.9"/></svg>
<div class="r" style="left:16px;top:252.1px;width:627px;height:13.2px;background:#e3e3e3;"></div>
<svg class="r sv" style="left:17.50px;top:250.94px" width="342" height="17"><g text-anchor="middle" font-family="Liberation Serif" font-size="12.3" fill="#1e1e1e" stroke="#1e1e1e" stroke-width="0.35"><text transform="scale(0.5,1)" y="13" x="443.6">D</text><text transform="scale(0.65,1)" y="13" x="71.2 146.2">PS</text><text transform="scale(0.7,1)" y="13" x="3.5 10.4 17.4 24.4 31.3 38.3 45.3 52.2 73.1 80.1 87.1 94.0 101.0 107.9 114.9 121.9 142.8 149.7 156.7 170.6 177.6 184.6 191.5 198.5 205.4 212.4 219.4 233.3 240.3 247.2 254.2 261.2 268.1 275.1 282.1 289.0 296.0 302.9 323.8 330.8 337.8 351.7 358.7 365.6 372.6 379.6 386.5 393.5 400.4 414.4 421.3 428.3 435.3 442.2 449.2 456.2 463.1 470.1 477.1">Internetrotocol,rc:10.0.0.5(10.0.0.5),st:10.0.0.4(10.0.0.4)</text></g></svg>
<svg class="r" style="left:6.5px;top:254.54px" width="6" height="10" viewBox="0 0 6 10"><path d="M0.7 0.7 L4.6 4.6 L0.7 8.5Z" fill="none" stroke="#333" stroke-width="0.9"/></svg>
<div class="r" style="left:16px;top:266.8px;width:627px;height:13.2px;background:#e3e3e3;"></div>
<svg class="r sv" style="left:17.50px;top:265.61px" width="513" height="17"><g text-anchor="middle" font-family="Liberation Serif" font-size="12.3" fill="#1e1e1e" stroke="#1e1e1e" stroke-width="0.35"><text transform="scale(0.5,1)" y="13" x="53.6 550.9 872.6">mDA</text><text transform="scale(0.55,1)" y="13" x="119.7">C</text><text transform="scale(0.6,1)" y="13" x="4.1 792.2">TL</text><text transform="scale(0.65,1)" y="13" x="161.2 236.2 266.2 453.8 611.2">PSPPS</text><text transform="scale(0.7,1)" y="13" x="10.4 17.4 24.4 31.3 45.3 52.2 59.2 66.2 73.1 80.1 101.0 107.9 114.9 121.9 128.8 135.8 156.7 163.7 170.6 177.6 184.6 191.5 198.5 205.4 226.3 233.3 254.2 261.2 268.1 275.1 289.0 296.0 302.9 309.9 316.9 330.8 337.8 344.7 351.7 358.7 365.6 372.6 379.6 400.4 407.4 428.3 435.3 442.2 449.2 463.1 470.1 477.1 484.0 491.0 504.9 511.9 518.8 525.8 532.8 539.7 546.7 553.7 574.6 581.5 588.5 602.4 609.4 630.3 637.2 644.2 658.1 665.1 686.0 692.9 699.9 713.8 720.8">ransissionontrolrotocol,rcort:19303(19303),stort:33924(33924),eq:1,ck:1,en:64</text></g></svg>
<svg class="r" style="left:6.5px;top:270.01px" width="8" height="7" viewBox="0 0 8 7"><path d="M0.7 0.7 L6.5 0.7 L3.6 5.6Z" fill="none" stroke="#333" stroke-width="0.9"/></svg>
<svg class="r sv" style="left:28.90px;top:280.28px" width="133" height="17"><g text-anchor="middle" font-family="Liberation Serif" font-size="12.3" fill="#1e1e1e" stroke="#1e1e1e" stroke-width="0.35"><text transform="scale(0.65,1)" y="13" x="3.8">S</text><text transform="scale(0.7,1)" y="13" x="10.4 17.4 24.4 31.3 38.3 52.2 59.2 66.2 73.1 80.1 94.0 101.0 107.9 114.9 121.9 135.8 142.8 149.7 156.7 163.7 170.6 177.6">ourceport:19303(19303)</text></g></svg>
<svg class="r sv" style="left:28.90px;top:294.95px" width="157" height="17"><g text-anchor="middle" font-family="Liberation Serif" font-size="12.3" fill="#1e1e1e" stroke="#1e1e1e" stroke-width="0.35"><text transform="scale(0.5,1)" y="13" x="4.9">D</text><text transform="scale(0.7,1)" y="13" x="10.4 17.4 24.4 31.3 38.3 45.3 52.2 59.2 66.2 73.1 87.1 94.0 101.0 107.9 114.9 128.8 135.8 142.8 149.7 156.7 170.6 177.6 184.6 191.5 198.5 205.4 212.4">estinationport:33924(33924)</text></g></svg>
<svg class="r sv" style="left:28.90px;top:309.62px" width="240" height="17"><g text-anchor="middle" font-family="Liberation Serif" font-size="12.3" fill="#1e1e1e" stroke="#1e1e1e" stroke-width="0.35"><text transform="scale(0.5,1)" y="13" x="112.1 424.1">mm</text><text transform="scale(0.65,1)" y="13" x="3.8">S</text><text transform="scale(0.7,1)" y="13" x="10.4 17.4 24.4 31.3 38.3 45.3 52.2 66.2 73.1 87.1 94.0 101.0 107.9 121.9 156.7 163.7 170.6 177.6 184.6 191.5 198.5 205.4 212.4 226.3 233.3 240.3 247.2 254.2 261.2 268.1 275.1 289.0 296.0 309.9 316.9 323.8 330.8">equencenuber:1(relativesequencenuber)</text></g></svg>
<svg class="r sv" style="left:28.90px;top:324.29px" width="279" height="17"><g text-anchor="middle" font-family="Liberation Serif" font-size="12.3" fill="#1e1e1e" stroke="#1e1e1e" stroke-width="0.35"><text transform="scale(0.5,1)" y="13" x="14.6 170.6 492.4">Nmm</text><text transform="scale(0.7,1)" y="13" x="3.5 17.4 24.4 31.3 45.3 52.2 59.2 66.2 73.1 80.1 87.1 94.0 107.9 114.9 128.8 135.8 142.8 149.7 163.7 170.6 205.4 212.4 219.4 226.3 233.3 240.3 247.2 254.2 261.2 275.1 282.1 289.0 296.0 302.9 309.9 316.9 323.8 337.8 344.7 358.7 365.6 372.6 379.6 386.5">[extsequencenuber:65(relativesequencenuber)]</text></g></svg>
<svg class="r sv" style="left:28.90px;top:338.96px" width="250" height="17"><g text-anchor="middle" font-family="Liberation Serif" font-size="12.3" fill="#1e1e1e" stroke="#1e1e1e" stroke-width="0.35"><text transform="scale(0.5,1)" y="13" x="4.9 53.6 112.1 180.4 443.6">Awmmm</text><text transform="scale(0.7,1)" y="13" x="10.4 17.4 24.4 31.3 45.3 52.2 59.2 66.2 73.1 87.1 94.0 101.0 114.9 121.9 135.8 142.8 149.7 156.7 170.6 205.4 212.4 219.4 226.3 233.3 240.3 247.2 254.2 261.2 275.1 282.1 289.0 302.9 309.9 323.8 330.8 337.8 344.7">cknoledgeentnuber:1(relativeacknuber)</text></g></svg>
<svg class="r sv" style="left:28.90px;top:353.63px" width="118" height="17"><g text-anchor="middle" font-family="Liberation Serif" font-size="12.3" fill="#1e1e1e" stroke="#1e1e1e" stroke-width="0.35"><text transform="scale(0.5,1)" y="13" x="4.9">H</text><text transform="scale(0.7,1)" y="13" x="10.4 17.4 24.4 31.3 38.3 52.2 59.2 66.2 73.1 80.1 87.1 94.0 107.9 114.9 128.8 135.8 142.8 149.7 156.7">eaderlength:32bytes</text></g></svg>
<svg class="r sv" style="left:28.90px;top:368.30px" width="123" height="17"><g text-anchor="middle" font-family="Liberation Serif" font-size="12.3" fill="#1e1e1e" stroke="#1e1e1e" stroke-width="0.35"><text transform="scale(0.5,1)" y="13" x="170.6 199.9 219.4">HAK</text><text transform="scale(0.55,1)" y="13" x="190.6">C</text><text transform="scale(0.65,1)" y="13" x="3.8 116.2 123.8">FPS</text><text transform="scale(0.7,1)" y="13" x="10.4 17.4 24.4 31.3 38.3 52.2 59.2 66.2 73.1 80.1 87.1 101.0 128.8 163.7">lags:0x0018(,)</text></g></svg>
<svg class="r" style="left:17.8px;top:371.9px" width="6" height="10" viewBox="0 0 6 10"><path d="M0.7 0.7 L4.6 4.6 L0.7 8.5Z" fill="none" stroke="#333" stroke-width="0.9"/></svg>
<div class="r" style="left:5px;top:384.2px;width:638px;height:14.2px;background:#3e63b0;"></div>
<svg class="r sv" style="left:28.90px;top:382.97px" width="133" height="17"><g text-anchor="middle" font-family="Liberation Serif" font-size="12.3" fill="#e8ecff" stroke="#e8ecff" stroke-width="0.35"><text transform="scale(0.5,1)" y="13" x="4.9 53.6">Ww</text><text transform="scale(0.7,1)" y="13" x="10.4 17.4 24.4 31.3 52.2 59.2 66.2 73.1 80.1 94.0 101.0 107.9 114.9 128.8 135.8 142.8 149.7 156.7 163.7 170.6 177.6">indosize:5888(scaled)</text></g></svg>
<svg class="r sv" style="left:28.90px;top:397.64px" width="133" height="17"><g text-anchor="middle" font-family="Liberation Serif" font-size="12.3" fill="#1e1e1e" stroke="#1e1e1e" stroke-width="0.35"><text transform="scale(0.5,1)" y="13" x="73.1">m</text><text transform="scale(0.55,1)" y="13" x="4.4">C</text><text transform="scale(0.7,1)" y="13" x="10.4 17.4 24.4 31.3 38.3 45.3 59.2 73.1 80.1 87.1 94.0 101.0 107.9 121.9 128.8 135.8 142.8 149.7 156.7 163.7 170.6 177.6">hecksu:0xdb1c[correct]</text></g></svg>
<svg class="r sv" style="left:28.90px;top:412.31px" width="99" height="17"><g text-anchor="middle" font-family="Liberation Serif" font-size="12.3" fill="#1e1e1e" stroke="#1e1e1e" stroke-width="0.35"><text transform="scale(0.5,1)" y="13" x="4.9">O</text><text transform="scale(0.7,1)" y="13" x="10.4 17.4 24.4 31.3 38.3 45.3 52.2 66.2 73.1 80.1 94.0 101.0 107.9 114.9 121.9 128.8">ptions:(12bytes)</text></g></svg>
<svg class="r" style="left:17.8px;top:415.91px" width="6" height="10" viewBox="0 0 6 10"><path d="M0.7 0.7 L4.6 4.6 L0.7 8.5Z" fill="none" stroke="#333" stroke-width="0.9"/></svg>
<svg class="r sv" style="left:28.90px;top:426.98px" width="138" height="17"><g text-anchor="middle" font-family="Liberation Serif" font-size="12.3" fill="#1e1e1e" stroke="#1e1e1e" stroke-width="0.35"><text transform="scale(0.5,1)" y="13" x="73.1">m</text><text transform="scale(0.55,1)" y="13" x="13.3">C</text><text transform="scale(0.6,1)" y="13" x="4.1">T</text><text transform="scale(0.65,1)" y="13" x="18.8">P</text><text transform="scale(0.7,1)" y="13" x="31.3 38.3 45.3 59.2 66.2 73.1 87.1 94.0 101.0 107.9 121.9 128.8 135.8 149.7 156.7 163.7 170.6 177.6 184.6">segentdata(64bytes)</text></g></svg>
<svg class="r" style="left:316px;top:444px" width="17" height="5" viewBox="0 0 17 5"><path d="M1 5 L3 0 M4 5 L6 0 M7 5 L9 0 M10 5 L12 0 M13 5 L15 0" stroke="#c4c4c4" stroke-width="0.8"/></svg>
<div class="r" style="left:4px;top:449.3px;width:629px;height:66px;background:#fff;border:1px solid #a4a4a4;box-sizing:border-box;"></div>
<div class="r" style="left:33.9px;top:463px;width:24.2px;height:12.6px;background:#44678f;"></div>
<div class="r" style="left:282.2px;top:463px;width:9.7px;height:12.6px;background:#44678f;"></div>
<svg class="r sv" style="left:4.10px;top:448.00px" width="367" height="17"><g text-anchor="middle" font-family="Liberation Serif" font-size="12.3" fill="#202020" stroke="#202020" stroke-width="0.08"><text transform="scale(0.5,1)" y="13" x="580.1">K</text><text transform="scale(0.55,1)" y="13" x="633.8">B</text><text transform="scale(0.6,1)" y="13" x="564.7">T</text><text transform="scale(0.7,1)" y="13" x="3.5 10.4 17.4 24.4 45.3 52.2 66.2 73.1 87.1 94.0 107.9 114.9 128.8 135.8 149.7 156.7 170.6 177.6 191.5 198.5 219.4 226.3 240.3 247.2 261.2 268.1 282.1 289.0 302.9 309.9 323.8 330.8 344.7 351.7 365.6 372.6 400.4 407.4 421.3 428.3 435.3 442.2 449.2 463.1 470.1 477.1 491.0 504.9 511.9">002000044b678484120df0793054b3428018..g.....y0...</text></g></svg>
<svg class="r sv" style="left:4.10px;top:460.95px" width="367" height="17"><g text-anchor="middle" font-family="Liberation Serif" font-size="12.3" fill="#202020" stroke="#202020" stroke-width="0.08"><text transform="scale(0.7,1)" y="13" x="3.5 10.4 17.4 24.4 87.1 94.0 107.9 114.9 128.8 135.8 149.7 156.7 170.6 177.6 191.5 198.5 219.4 226.3 240.3 247.2 261.2 268.1 282.1 289.0 302.9 309.9 323.8 330.8 344.7 351.7 365.6 372.6 414.4 421.3 428.3 435.3 442.2 449.2 463.1 470.1 477.1 484.0 491.0 497.9 504.9 511.9">0030db1c00000101080a043590bf04a2.........5....</text></g></svg>
<svg class="r sv" style="left:4.10px;top:473.90px" width="367" height="17"><g text-anchor="middle" font-family="Liberation Serif" font-size="12.3" fill="#202020" stroke="#202020" stroke-width="0.08"><text transform="scale(0.65,1)" y="13" x="438.8">&lt;</text><text transform="scale(0.7,1)" y="13" x="3.5 10.4 17.4 24.4 45.3 52.2 66.2 73.1 87.1 94.0 107.9 114.9 128.8 135.8 149.7 156.7 170.6 177.6 191.5 198.5 219.4 226.3 240.3 247.2 261.2 268.1 282.1 289.0 302.9 309.9 323.8 330.8 344.7 351.7 365.6 372.6 400.4 414.4 421.3 428.3 435.3 442.2 449.2 463.1 470.1 477.1 484.0 491.0 497.9 504.9 511.9">0040c53c6e657470657266006e6574706572.netperf.netper</text></g></svg>
<svg class="r sv" style="left:4.10px;top:486.85px" width="367" height="17"><g text-anchor="middle" font-family="Liberation Serif" font-size="12.3" fill="#202020" stroke="#202020" stroke-width="0.08"><text transform="scale(0.7,1)" y="13" x="3.5 10.4 17.4 24.4 45.3 52.2 66.2 73.1 87.1 94.0 107.9 114.9 128.8 135.8 149.7 156.7 170.6 177.6 191.5 198.5 219.4 226.3 240.3 247.2 261.2 268.1 282.1 289.0 302.9 309.9 323.8 330.8 344.7 351.7 365.6 372.6 400.4 407.4 414.4 421.3 428.3 435.3 442.2 449.2 463.1 470.1 477.1 484.0 491.0 497.9 504.9 511.9">005066006e657470657266006e6574706572f.netperf.netper</text></g></svg>
<svg class="r sv" style="left:4.10px;top:499.80px" width="367" height="17"><g text-anchor="middle" font-family="Liberation Serif" font-size="12.3" fill="#202020" stroke="#202020" stroke-width="0.08"><text transform="scale(0.7,1)" y="13" x="3.5 10.4 17.4 24.4 45.3 52.2 66.2 73.1 87.1 94.0 107.9 114.9 128.8 135.8 149.7 156.7 170.6 177.6 191.5 198.5 219.4 226.3 240.3 247.2 261.2 268.1 282.1 289.0 302.9 309.9 323.8 330.8 344.7 351.7 365.6 372.6 400.4 407.4 414.4 421.3 428.3 435.3 442.2 449.2 463.1 470.1 477.1 484.0 491.0 497.9 504.9 511.9">006066006e657470657266006e6574706572f.netperf.netper</text></g></svg>
<svg class="r sv" style="left:33.35px;top:460.95px" width="30" height="17"><g text-anchor="middle" font-family="Liberation Serif" font-size="12.3" fill="#fff" stroke="#fff" stroke-width="0.08"><text transform="scale(0.7,1)" y="13" x="3.5 10.4 24.4 31.3">002e</text></g></svg>
<svg class="r sv" style="left:281.98px;top:460.95px" width="16" height="17"><g text-anchor="middle" font-family="Liberation Serif" font-size="12.3" fill="#fff" stroke="#fff" stroke-width="0.08"><text transform="scale(0.7,1)" y="13" x="3.5 10.4">..</text></g></svg>
<div class="r" style="left:634.5px;top:449.3px;width:9.5px;height:66.5px;background:#c8c8c8;border:1px solid #a0a0a0;box-sizing:border-box;"></div>
<div class="r" style="left:634.5px;top:449.3px;width:9.5px;height:11.3px;background:#e8e8e8;border:1px solid #8a8a8a;box-sizing:border-box;"></div>
<svg class="r" style="left:636px;top:452.3px" width="6" height="5" viewBox="0 0 6 5"><path d="M0.5 4.5 L3 1 L5.5 4.5Z" fill="#222"/></svg>
<div class="r" style="left:634.5px;top:468.4px;width:9.5px;height:23px;background:#ececec;border:1px solid #8a8a8a;box-sizing:border-box;"></div>
<svg class="r" style="left:636px;top:471px" width="6" height="17" viewBox="0 0 6 17"><path d="M1 9 L5 4 M1 12 L5 7 M1 15 L5 10" stroke="#bbb" stroke-width="0.8"/></svg>
<div class="r" style="left:634.5px;top:505px;width:9.5px;height:11px;background:#e8e8e8;border:1px solid #8a8a8a;box-sizing:border-box;"></div>
<svg class="r" style="left:636px;top:508px" width="6" height="5" viewBox="0 0 6 5"><path d="M0.5 0.5 L3 4 L5.5 0.5Z" fill="#222"/></svg>
<div class="r" style="left:4px;top:515px;width:629px;height:2px;background:#bdbdbd;"></div>
<div class="r" style="left:4px;top:517px;width:640px;height:16px;background:#e3e3e3;"></div>
<div class="r" style="left:4px;top:533px;width:640px;height:1.6px;background:#b6bec6;"></div>
<div class="t" style="left:4.50px;top:520.24px;font-family:'Liberation Sans', sans-serif;font-size:10.7px;line-height:10.7px;color:#3a3a3a;transform:scaleX(0.8093);">Window size (tcp.window_siz</div>
<svg class="r" style="left:117.5px;top:518.5px" width="4" height="13" viewBox="0 0 4 13"><path d="M1 1 L1 12 M3 1 L3 12" stroke="#b0b0b0" stroke-width="0.8" stroke-dasharray="1.5 1"/></svg>
<div class="t" style="left:124.50px;top:520.24px;font-family:'Liberation Sans', sans-serif;font-size:10.7px;line-height:10.7px;color:#3a3a3a;transform:scaleX(0.8147);">P: 48303 D: 48303 M: 0 Drops: 0</div>
<svg class="r" style="left:633px;top:519px" width="11" height="14" viewBox="0 0 11 14"><path d="M0 14 L11 3 M2.5 14 L11 5.5 M5 14 L11 8 M7.5 14 L11 10.5" stroke="#b4b4b4" stroke-width="0.9"/></svg>
<div class="t" style="left:3.70px;top:539.63px;font-family:'Liberation Sans', sans-serif;font-size:12.6px;line-height:12.6px;color:#000;transform:scaleX(0.9546);font-style:italic;-webkit-text-stroke:0.35px #000;">Figure 2-4</div>
<div class="t" style="left:67.50px;top:539.63px;font-family:'Liberation Sans', sans-serif;font-size:12.6px;line-height:12.6px;color:#000;transform:scaleX(0.9523);font-style:italic;-webkit-text-stroke:0.35px #000;">ethereal GUI</div>
<svg class="r" style="left:304px;top:214px" width="11" height="13" viewBox="0 0 11 13"><path d="M1 1 L7.8 5.2 L5.2 6 L9.3 10.5 L8.1 11.6 L4.3 7.1 L2.1 8.8Z" fill="#000" stroke="#fff" stroke-width="0.6" stroke-linejoin="round"/></svg></body></html>
